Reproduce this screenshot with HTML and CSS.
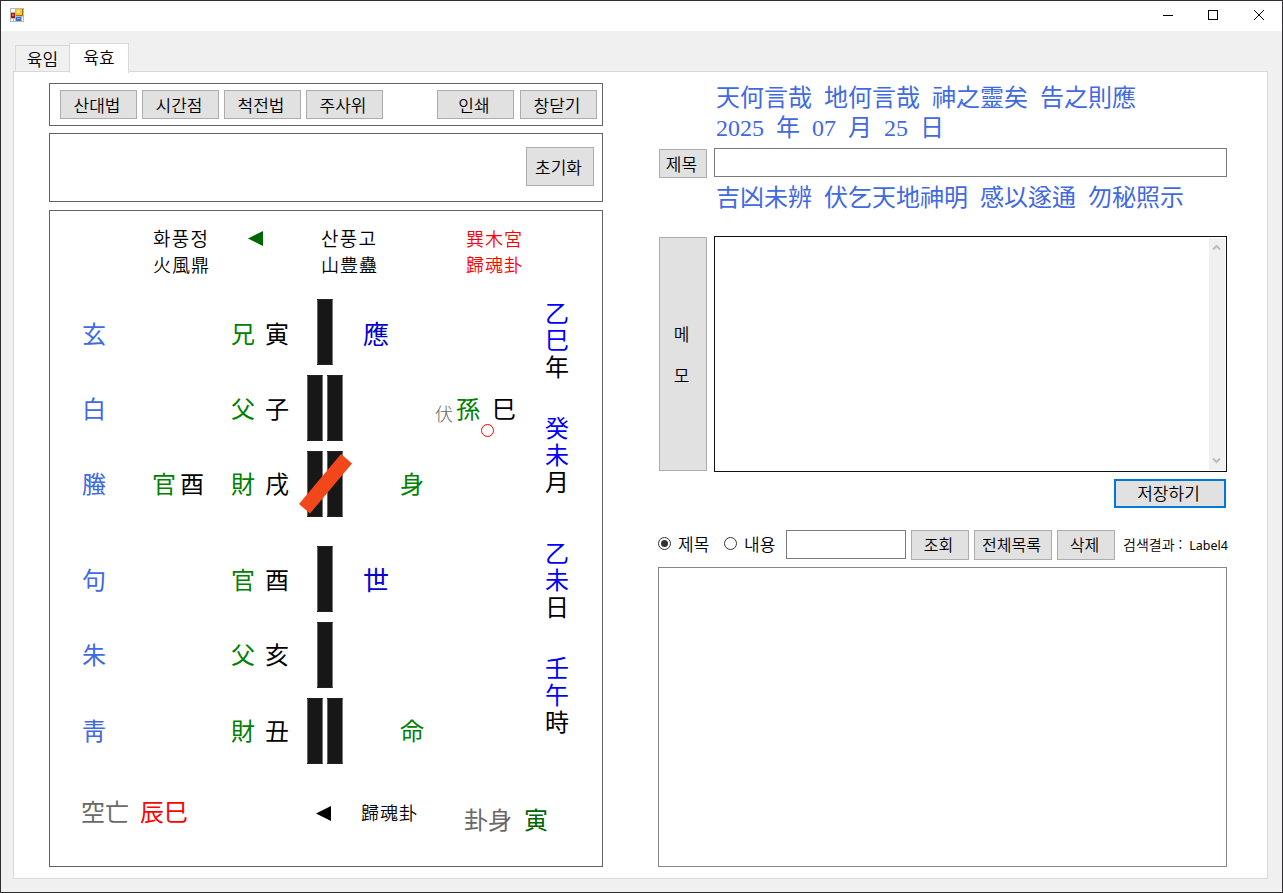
FILE: index.html
```html
<!DOCTYPE html>
<html lang="ko">
  <head>
    <meta charset="UTF-8" />
    <title>육효</title>
    <link rel="stylesheet" href="styles.css">
  </head>
  <body>
    <div class="window">
      <!-- Title bar -->
      <div class="title-bar">
        <svg class="app-icon" width="14" height="14" viewBox="0 0 14 14">
          <rect width="14" height="14" fill="#b8b8b8" />
          <path d="M1 1h4v3H1zM1 11h2v2H1zM4 11h1v2H4zM12 9h1v4h-1z" fill="#fff" />
          <rect x="6" y="1" width="7" height="7" fill="#a87408" />
          <rect x="6" y="1" width="6" height="6" fill="#fbc62f" />
          <rect x="7" y="2" width="3" height="3" fill="#ffe58c" />
          <rect x="1" y="5" width="4" height="5" fill="#9c1c16" />
          <rect x="2" y="6" width="2" height="2" fill="#e06a5c" />
          <rect x="6" y="9" width="5" height="4" fill="#2f6fd6" />
          <rect x="7" y="10" width="3" height="1" fill="#7fb0f5" />
        </svg>
        <svg class="window-controls" width="104" height="12" viewBox="0 0 104 12" fill="none" stroke="#000">
          <path d="M1 6.500h10" />
          <rect x="46.500" y="1.500" width="9" height="9" />
          <path d="M92 1l10 10M102 1L92 11" />
        </svg>
      </div>

      <!-- Tabs -->
      <div class="tabs">
        <div class="tab">육임</div>
        <div class="tab active">육효</div>
      </div>

      <div class="page">
        <div class="left">
          <div class="box toolbar">
            <button>산대법</button>
            <button>시간점</button>
            <button>척전법</button>
            <button>주사위</button>
            <button class="print">인쇄</button>
            <button class="close">창닫기</button>
          </div>

          <div class="box reset-box">
            <button class="reset">초기화</button>
          </div>

          <!-- Hexagram chart -->
          <div class="box chart">
            <div class="chart-head">
              <div><p class="hangul">화풍정</p><p>火風鼎</p></div>
              <svg class="arrow green" width="15" height="15"><path d="M0 7.500L15 0v15z" /></svg>
              <div><p class="hangul">산풍고</p><p>山豊蠱</p></div>
              <div class="red"><p>巽木宮</p><p>歸魂卦</p></div>
            </div>

            <div class="chart-body">
              <div class="lines">
                <div class="line top">
                  <span class="spirit">玄</span>
                  <span></span>
                  <span class="kin">兄</span>
                  <span>寅</span>
                  <div class="bars"><i></i></div>
                  <span class="role">應</span>
                </div>
                <div class="line">
                  <span class="spirit">白</span>
                  <span></span>
                  <span class="kin">父</span>
                  <span>子</span>
                  <div class="bars"><i></i><i></i></div>
                  <span class="hidden-line"><small>伏</small><b class="kin">孫</b><b>巳</b><em></em></span>
                </div>
                <div class="line third">
                  <span class="spirit">螣</span>
                  <span class="changed"><b class="kin">官</b><b>酉</b></span>
                  <span class="kin">財</span>
                  <span>戌</span>
                  <div class="bars">
                    <i></i><i></i>
                    <svg class="moving" width="54" height="60"><path d="M42 3L53 12.500 11 62.500 0 53z" /></svg>
                  </div>
                  <span class="body-mark">身</span>
                </div>
                <div class="line lower">
                  <span class="spirit">句</span>
                  <span></span>
                  <span class="kin">官</span>
                  <span>酉</span>
                  <div class="bars"><i></i></div>
                  <span class="role">世</span>
                </div>
                <div class="line fifth">
                  <span class="spirit">朱</span>
                  <span></span>
                  <span class="kin">父</span>
                  <span>亥</span>
                  <div class="bars"><i></i></div>
                </div>
                <div class="line bottom">
                  <span class="spirit">靑</span>
                  <span></span>
                  <span class="kin">財</span>
                  <span>丑</span>
                  <div class="bars"><i></i><i></i></div>
                  <span class="body-mark">命</span>
                </div>
              </div>

              <!-- Four pillars -->
              <div class="pillars">
                <div><b>乙</b><b>巳</b>年</div>
                <div><b>癸</b><b>未</b>月</div>
                <div class="day"><b>乙</b><b>未</b>日</div>
                <div><b>壬</b><b>午</b>時</div>
              </div>
            </div>

            <div class="chart-foot">
              <span class="gray">空亡</span>
              <span class="red">辰巳</span>
              <svg class="arrow" width="15" height="15"><path d="M0 7.500L15 0v15z" /></svg>
              <span class="kind">歸魂卦</span>
              <span class="gray low">卦身</span>
              <span class="dark-green low">寅</span>
            </div>
          </div>
        </div>

        <div class="right">
          <div class="prayer">
            <p>天何言哉 地何言哉 神之靈矣 告之則應</p>
            <p>2025 年 07 月 25 日</p>
          </div>
          <div class="title-row">
            <button>제목</button>
            <input type="text" />
          </div>
          <p class="prayer second">吉凶未辨 伏乞天地神明 感以遂通 勿秘照示</p>

          <div class="memo-row">
            <button><span>메</span><span>모</span></button>
            <div class="memo">
              <div class="scrollbar">
                <svg width="9" height="7"><path d="M1 5.500l3.500-3.500L8 5.500" /></svg>
                <svg width="9" height="7"><path d="M1 1.500L4.500 5 8 1.500" /></svg>
              </div>
            </div>
          </div>
          <button class="save">저장하기</button>

          <!-- Search -->
          <div class="search">
            <span class="radio checked"></span><label>제목</label>
            <span class="radio"></span><label>내용</label>
            <input type="text" />
            <button>조회</button>
            <button class="all">전체목록</button>
            <button>삭제</button>
            <span class="result">검색결과 :<span>Label4</span></span>
          </div>
          <div class="list"></div>
        </div>
      </div>
    </div>
  </body>
</html>
```
FILE: styles.css
```css
* {
  box-sizing: border-box;
}

body {
  margin: 0;
  font-family: "Noto Sans CJK KR", sans-serif;
  font-size: 17px;
  font-weight: 350;
  color: #000;
}

p {
  margin: 0;
}

b,
i,
em {
  font-weight: inherit;
  font-style: normal;
}

.window {
  width: 1283px;
  height: 893px;
  border: 1px solid #2f2d30;
  background: #f0f0f0;
  overflow: hidden;
}

/* Title bar */
.title-bar {
  display: flex;
  justify-content: space-between;
  height: 30px;
  padding: 7px 16px 0 9px;
  background: #fff;
}

.window-controls {
  margin-top: 1px;
}

/* Tabs */
.tabs {
  display: flex;
  align-items: flex-end;
  height: 41px;
  padding-left: 14px;
}

.tab {
  width: 54px;
  height: 27px;
  border: 1px solid #d9d9d9;
  border-width: 1px 0 0 1px;
  font-size: 17px;
  line-height: 25px;
  text-align: center;
}

.tab.active {
  width: 60px;
  height: 30px;
  margin-bottom: -1px;
  border-right-width: 1px;
  background: #fff;
  line-height: 25px;
  z-index: 1;
}

.page {
  display: flex;
  gap: 55px;
  width: 1255px;
  height: 808px;
  margin-left: 12px;
  margin-top: -1px;
  padding: 11px 0 0 35px;
  border: 1px solid #d9d9d9;
  background: #fff;
}

/* Buttons and inputs */
button {
  height: 29px;
  padding: 0 3px 1px 0;
  border: 1px solid #adadad;
  background: #e1e1e1;
  color: #000;
  font: inherit;
  line-height: 25px;
}

input {
  height: 29px;
  border: 1px solid #7a7a7a;
  background: #fff;
}

.box {
  border: 1px solid #646464;
}

/* Left side */
.left {
  width: 554px;
}

.toolbar {
  display: flex;
  gap: 5px;
  height: 43px;
  padding: 6px 0 0 10px;
}

.toolbar button {
  width: 77px;
}

.toolbar .print {
  margin-left: 49px;
}

.toolbar .close {
  margin-left: 1px;
}

.reset-box {
  display: flex;
  justify-content: flex-end;
  height: 69px;
  margin: 7px 0 8px;
  padding: 13px 8px;
}

.reset {
  width: 68px;
  height: 39px;
}

/* Chart */
.chart {
  height: 657px;
  font-size: 24px;
  font-weight: 400;
}

.chart-head {
  display: grid;
  grid-template-columns: 95px 73px 145px 80px;
  height: 88px;
  padding: 14px 0 0 103px;
  font-size: 18px;
  font-weight: 350;
  letter-spacing: 1px;
  line-height: 26px;
}

.hangul {
  font-size: 19px;
  letter-spacing: 1.3px;
}

.arrow {
  margin-top: 6px;
}

.arrow.green {
  fill: #006400;
}

.red {
  color: #f00;
}

.gray {
  color: #696969;
}

.dark-green {
  color: #006400;
}

.kin,
.body-mark {
  color: #008000;
}

.chart-body {
  display: flex;
  height: 465px;
}

.lines {
  display: flex;
  flex-direction: column;
  gap: 10px;
  width: 495px;
  padding-left: 32px;
}

.line {
  display: grid;
  grid-template-columns: 70px 79px 34px 34px 52px 1fr;
  grid-template-rows: 66px;
  height: 66px;
  line-height: 66px;
}

.line.top {
  line-height: 68px;
}

.line.third,
.line.fifth {
  line-height: 64px;
}

.line.lower {
  margin-top: 19px;
}

.line.bottom {
  line-height: 63px;
}

.spirit {
  color: #4169e1;
}

.changed {
  display: flex;
  gap: 4px;
}

.bars {
  position: relative;
  display: flex;
  justify-content: center;
  gap: 4px;
}

.bars i {
  width: 16px;
  background: #171717;
  border: 1px solid #222;
  border-width: 1px 1px 1px 0;
  border-right-color: #777;
  box-shadow: inset 1px 0 #666;
}

.moving {
  position: absolute;
  left: 0;
  top: 0;
  overflow: visible;
  fill: #f2471a;
}

.role {
  padding-left: 12px;
  color: #0000cd;
  font-size: 26px;
}

.body-mark {
  padding-left: 49px;
}

.hidden-line {
  position: relative;
  display: flex;
  padding-left: 84px;
}

.hidden-line small {
  width: 21px;
  padding-top: 5px;
  color: #696969;
  font-size: 18px;
  font-weight: 300;
}

.hidden-line .kin {
  width: 36px;
}

.hidden-line em {
  position: absolute;
  left: 130px;
  top: 49px;
  width: 13px;
  height: 13px;
  border: 1px solid #f00;
  border-radius: 50%;
}

.pillars {
  margin-top: -1px;
  line-height: 27px;
}

.pillars div {
  width: 24px;
  height: 81px;
  margin-bottom: 34px;
}

.pillars .day {
  margin-top: 44px;
}

.pillars b {
  display: block;
  color: #00f;
}

.chart-foot {
  display: flex;
  padding: 32px 0 0 31px;
  line-height: 30px;
}

.chart-foot .red {
  margin-left: 11px;
}

.chart-foot .arrow {
  margin: 10px 30px 0 128px;
}

.kind {
  width: 103px;
  padding-top: 1px;
  font-size: 18px;
  font-weight: 350;
  letter-spacing: 1px;
}

.low {
  margin-right: 12px;
  padding-top: 8px;
}

/* Right side */
.right {
  width: 571px;
}

.prayer {
  padding-left: 58px;
  color: #4169e1;
  font-family: "Liberation Serif", "Noto Sans CJK KR", serif;
  font-size: 24px;
  font-weight: 400;
  line-height: 30px;
  word-spacing: 6px;
  white-space: nowrap;
}

.prayer:first-child {
  height: 65px;
}

.title-row {
  display: flex;
  gap: 7px;
  padding-left: 1px;
}

.title-row button {
  width: 48px;
  margin-top: 1px;
}

.title-row input {
  width: 513px;
}

.second {
  height: 58px;
  padding-top: 5px;
}

.memo-row {
  display: flex;
  gap: 7px;
  padding-left: 1px;
}

.memo-row button {
  display: flex;
  flex-direction: column;
  align-items: center;
  justify-content: center;
  gap: 16px;
  width: 48px;
  height: 234px;
  margin-top: 1px;
}

.memo {
  display: flex;
  justify-content: flex-end;
  width: 513px;
  height: 236px;
  padding: 1px;
  border: 1px solid #111;
}

.scrollbar {
  display: flex;
  flex-direction: column;
  justify-content: space-between;
  width: 16px;
  padding: 6px 3px;
  background: #f0f0f0;
}

.scrollbar svg {
  fill: none;
  stroke: #bcbcbc;
  stroke-width: 2;
}

.save {
  display: block;
  width: 112px;
  margin: 7px 0 22px 456px;
  border: 2px solid #0078d7;
  line-height: 24px;
}

/* Search */
.search {
  display: flex;
  height: 37px;
  line-height: 27px;
  white-space: nowrap;
}

.radio {
  width: 13px;
  height: 13px;
  margin-top: 7px;
  border: 1px solid #333;
  border-radius: 50%;
}

.radio.checked {
  padding: 2px;
  background: #333 content-box;
}

.search label {
  width: 45px;
  padding-left: 7px;
  margin-right: 8px;
}

.search label + .radio + label {
  width: 41px;
}

.search input {
  width: 120px;
  margin-right: 5px;
}

.search button {
  width: 58px;
  height: 30px;
  margin-right: 5px;
  font-size: 16px;
}

.search .all {
  width: 78px;
}

.result {
  padding: 1px 0 0 3px;
  font-size: 14px;
}

.result span {
  margin-left: 7px;
  font-family: "Noto Sans", sans-serif;
  font-size: 12.500px;
  font-weight: 400;
}

.list {
  width: 569px;
  height: 300px;
  border: 1px solid #828790;
}
```
